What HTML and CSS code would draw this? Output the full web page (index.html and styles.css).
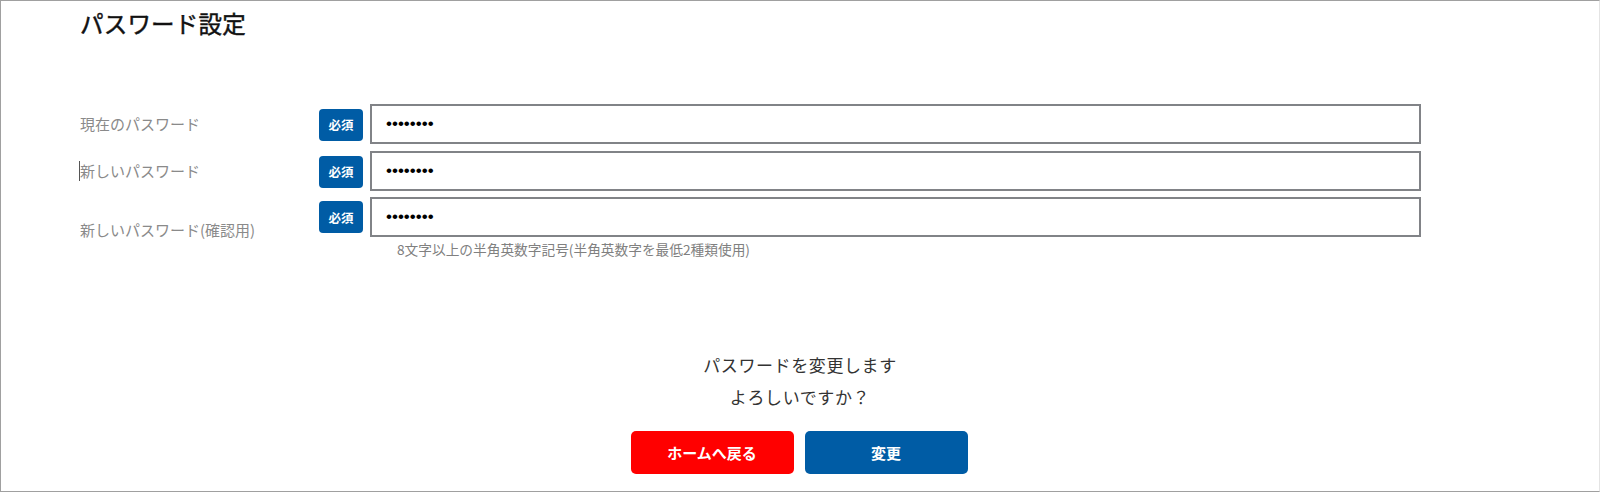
FILE: index.html
```html
<!DOCTYPE html>
<html lang="ja">
<head>
<meta charset="utf-8">
<title>パスワード設定</title>
<link rel="stylesheet" href="styles.css">
</head>
<body>
<div class="frame">
  <div class="content">
    <h1 class="title">パスワード設定</h1>
    <form class="form">
      <div class="row">
        <label class="label">現在のパスワード</label>
        <span class="badge">必須</span>
        <input class="input" type="password" value="abcdefgh">
      </div>
      <div class="row">
        <label class="label"><span class="caret"></span>新しいパスワード</label>
        <span class="badge">必須</span>
        <input class="input" type="password" value="abcdefgh">
      </div>
      <div class="row row-hint">
        <label class="label label-low">新しいパスワード(確認用)</label>
        <span class="badge">必須</span>
        <div class="field-col">
          <input class="input" type="password" value="abcdefgh">
          <p class="hint">8文字以上の半角英数字記号(半角英数字を最低2種類使用)</p>
        </div>
      </div>
    </form>
  </div>
  <div class="confirm">
    <p class="confirm-text">パスワードを変更します</p>
    <p class="confirm-text">よろしいですか？</p>
    <div class="actions">
      <button class="btn btn-red" type="button">ホームへ戻る</button>
      <button class="btn btn-blue" type="button">変更</button>
    </div>
  </div>
</div>
</body>
</html>
```

FILE: styles.css
```css
html, body {
  margin: 0;
  padding: 0;
  background: #fff;
}
body {
  font-family: "Noto Sans CJK JP", "Noto Sans", sans-serif;
}
.frame {
  box-sizing: border-box;
  width: 1600px;
  height: 492px;
  border: 1px solid #a0a0a0;
  border-right-color: #e4e4e4;
  overflow: hidden;
}
.content {
  padding-left: 79px;
}
.title {
  margin: 0;
  font-size: 23.5px;
  line-height: 44px;
  font-weight: 400;
  color: #111;
  letter-spacing: 0.2px;
  -webkit-text-stroke: 0.45px #111;
}
.form {
  margin: 59px 0 0;
  display: flex;
  flex-direction: column;
  gap: 7px;
}
.row {
  display: flex;
  align-items: center;
}
.row-hint {
  margin-top: -1px;
}
.label {
  width: 239px;
  flex: none;
  font-size: 15px;
  color: #8a8a8a;
  line-height: 20px;
  position: relative;
}
.caret {
  position: absolute;
  left: -1px;
  top: 0;
  height: 20px;
  border-left: 1px solid #555;
}
.badge {
  flex: none;
  width: 44px;
  height: 32px;
  margin-right: 7px;
  border-radius: 4px;
  background: #005ca5;
  color: #fff;
  font-size: 12.5px;
  font-weight: 700;
  display: flex;
  align-items: center;
  justify-content: center;
  margin-top: 1px;
}
.input {
  box-sizing: border-box;
  width: 1051px;
  height: 40px;
  border: 2px solid #818387;
  border-radius: 0;
  padding: 0 14px;
  font-family: "Liberation Sans", sans-serif;
  font-size: 17px;
  color: #000;
  background: #fff;
  outline: none;
  margin: 0;
}
.row-hint {
  align-items: flex-start;
}
.row-hint .badge {
  margin-top: 4px;
}
.label-low {
  align-self: center;
  margin-top: 1px;
}
.field-col {
  display: flex;
  flex-direction: column;
}
.hint {
  margin: 0;
  padding-left: 27px;
  font-size: 13.7px;
  line-height: 24px;
  color: #808080;
}
.confirm {
  margin-top: 88px;
  text-align: center;
}
.confirm-text {
  margin: 0;
  font-size: 17px;
  line-height: 32px;
  color: #333;
  letter-spacing: 0.6px;
}
.actions {
  margin-top: 18px;
  display: flex;
  justify-content: center;
  gap: 11px;
  padding-right: 2px;
}
.btn {
  width: 163px;
  height: 43px;
  border: none;
  border-radius: 5px;
  color: #fff;
  font-family: "Noto Sans CJK JP", "Noto Sans", sans-serif;
  font-size: 15px;
  font-weight: 700;
  cursor: pointer;
  padding: 0;
}
.btn-red {
  background: #ff0000;
}
.btn-blue {
  background: #005ca5;
}
```
